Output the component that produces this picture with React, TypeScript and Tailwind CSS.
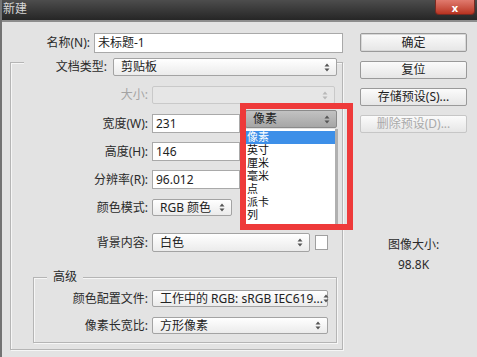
import React from 'react';

const font = "font-['Noto_Sans','Noto_Sans_CJK_SC',sans-serif]";

const Arrows = ({ color = '#555' }: { color?: string }) => (
  <svg width="6" height="9" viewBox="0 0 6 9" className="shrink-0">
    <path d="M3 0.5L5.5 3.5H0.5Z M3 8.5L0.5 5.5H5.5Z" fill={color} />
  </svg>
);

interface SelectProps {
  value?: string;
  width: string;
  height?: string;
  disabled?: boolean;
  active?: boolean;
}

const Select = ({ value, width, height = 'h-[18px]', disabled, active }: SelectProps) => (
  <div
    className={`${width} ${height} flex items-center justify-between rounded-[2px] border pl-[7px] pr-[6px] text-[12px] leading-none ${
      disabled
        ? 'border-[#c9c9c9] bg-[#e6e6e6]'
        : active
        ? 'border-[#8a8a8a] bg-gradient-to-b from-[#c2c2c2] to-[#a6a6a6] text-[#222]'
        : 'border-[#a3a3a3] bg-gradient-to-b from-white to-[#ebebeb] text-[#222]'
    }`}
  >
    <span className="whitespace-nowrap">{value}</span>
    <Arrows color={disabled ? '#b8b8b8' : '#555'} />
  </div>
);

const Input = ({ value, width }: { value: string; width: string }) => (
  <div className={`${width} h-[19px] flex items-center border border-[#a9a9a9] bg-white pl-[3px] text-[12px] text-[#222]`}>
    {value}
  </div>
);

const Label = ({ text, width, disabled }: { text: string; width: string; disabled?: boolean }) => (
  <div className={`${width} shrink-0 text-right text-[12px] leading-none whitespace-nowrap ${disabled ? 'text-[#a3a3a3]' : 'text-[#2a2a2a]'}`}>
    {text}
  </div>
);

const Button = ({ text, isDefault, disabled }: { text: string; isDefault?: boolean; disabled?: boolean }) => (
  <div
    className={`w-[107px] ${isDefault ? 'h-[19px] border-[#6a6a6a] shadow-[inset_0_0_0_1px_#d8d8d8]' : 'h-[18px]'} ${
      disabled ? 'border-[#c6c6c6] text-[#a9a9a9]' : 'border-[#9a9a9a] text-[#222]'
    } flex items-center justify-center rounded-[2px] border bg-gradient-to-b from-[#fbfbfb] to-[#e6e6e6] text-[12px] leading-none`}
  >
    {text}
  </div>
);

const units = ['像素', '英寸', '厘米', '毫米', '点', '派卡', '列'];

export default function App() {
  return (
    <div className={`${font} flex h-[357px] w-[477px] flex-col overflow-hidden border-l-2 border-[#737373] bg-[#e3e3e3]`}>
      {/* Title bar */}
      <div className="flex h-[22px] shrink-0 justify-between border-b-2 border-[#8d8d8d] bg-gradient-to-b from-[#4d4d4d] to-[#262626]">
        <span className="pl-[1px] pt-[2px] text-[12px] leading-[14px] text-[#d6d6d6]">新建</span>
        <div className="mr-[2px] flex h-[15px] w-[40px] items-center justify-center rounded-b-[4px] border border-t-0 border-[#7a2a22] bg-gradient-to-b from-[#e07a6e] to-[#b9321f] text-[11px] font-bold leading-none text-white">
          x
        </div>
      </div>

      {/* Body */}
      <div className="relative flex flex-1">
        {/* Left column */}
        <div className="flex w-[348px] flex-col">
          <div className="mt-[11px] flex h-[20px] items-center">
            <Label text="名称(N):" width="w-[88px]" />
            <div className="ml-[4px] flex h-[20px] w-[249px] items-center border border-[#a9a9a9] bg-white pl-[3px] text-[12px] text-[#222]">
              未标题-1
            </div>
          </div>

          {/* Preset group */}
          <div className="ml-[8px] mt-[9px] flex h-[288px] w-[333px] flex-col border border-[#b5b5b5] shadow-[inset_1px_1px_0_#f6f6f6,1px_1px_0_#f6f6f6]">
            <div className="-mt-[5px] ml-[13px] flex h-[18px] w-[313px] items-center bg-[#e3e3e3]">
              <Label text="文档类型:" width="w-[83px]" />
              <div className="ml-[6px]">
                <Select value="剪贴板" width="w-[224px]" />
              </div>
            </div>

            <div className="mt-[10px] flex h-[18px] items-center">
              <Label text="大小:" width="w-[137px]" disabled />
              <div className="ml-[4px]">
                <Select width="w-[183px]" disabled />
              </div>
            </div>

            <div className="mt-[10px] flex h-[19px] items-start">
              <div className="flex h-[19px] items-center">
                <Label text="宽度(W):" width="w-[137px]" />
              </div>
              <div className="ml-[4px]">
                <Input value="231" width="w-[88px]" />
              </div>
              <div className="-mt-[4px] ml-[5px]">
                <Select value="像素" width="w-[92px]" active />
              </div>
            </div>

            <div className="mt-[9px] flex h-[19px] items-center">
              <Label text="高度(H):" width="w-[137px]" />
              <div className="ml-[4px]">
                <Input value="146" width="w-[88px]" />
              </div>
            </div>

            <div className="mt-[9px] flex h-[19px] items-center">
              <Label text="分辨率(R):" width="w-[137px]" />
              <div className="ml-[4px]">
                <Input value="96.012" width="w-[88px]" />
              </div>
            </div>

            <div className="mt-[10px] flex h-[17px] items-center">
              <Label text="颜色模式:" width="w-[137px]" />
              <div className="ml-[4px]">
                <Select value="RGB 颜色" width="w-[80px]" height="h-[17px]" />
              </div>
            </div>

            <div className="mt-[17px] flex h-[19px] items-center">
              <Label text="背景内容:" width="w-[137px]" />
              <div className="ml-[4px]">
                <Select value="白色" width="w-[158px]" height="h-[19px]" />
              </div>
              <div className="ml-[5px] h-[15px] w-[13px] border border-[#a0a0a0] bg-white" />
            </div>

            {/* Advanced group */}
            <div className="ml-[22px] mt-[25px] flex h-[66px] w-[304px] flex-col border border-[#b5b5b5] shadow-[inset_1px_1px_0_#f6f6f6,1px_1px_0_#f6f6f6]">
              <div className="-mt-[8px] ml-[13px] flex h-[14px] w-fit items-center bg-[#e3e3e3] px-[6px] text-[12px] leading-none text-[#2a2a2a]">
                高级
              </div>
              <div className="mt-[6px] flex h-[17px] items-center">
                <Label text="颜色配置文件:" width="w-[114px]" />
                <div className="ml-[4px]">
                  <Select value="工作中的 RGB: sRGB IEC619..." width="w-[176px]" height="h-[17px]" />
                </div>
              </div>
              <div className="mt-[10px] flex h-[17px] items-center">
                <Label text="像素长宽比:" width="w-[114px]" />
                <div className="ml-[4px]">
                  <Select value="方形像素" width="w-[176px]" height="h-[17px]" />
                </div>
              </div>
            </div>
          </div>
        </div>

        {/* Right column */}
        <div className="ml-[10px] flex w-[107px] flex-col">
          <div className="mt-[11px]">
            <Button text="确定" isDefault />
          </div>
          <div className="mt-[9px]">
            <Button text="复位" />
          </div>
          <div className="mt-[9px]">
            <Button text="存储预设(S)..." />
          </div>
          <div className="mt-[9px]">
            <Button text="删除预设(D)..." disabled />
          </div>
          <div className="mt-[105px] text-center text-[12px] leading-[14px] text-[#2a2a2a]">图像大小:</div>
          <div className="mt-[6px] text-center text-[12px] leading-[14px] text-[#2a2a2a]">98.8K</div>
        </div>

        {/* Open unit dropdown */}
        <div className="absolute left-[244px] top-[107px] flex w-[92px] flex-col border-r-[3px] border-[#b0b0b0] bg-white pt-[2px] pb-[2px] font-['Liberation_Sans','Noto_Sans_CJK_SC',sans-serif]">
          {units.map((u, i) => (
            <div
              key={u}
              className={`flex h-[13px] items-center pl-[1px] text-[11px] leading-none ${i === 0 ? 'bg-[#3d8fe8] text-white' : 'text-[#111]'}`}
            >
              {u}
            </div>
          ))}
        </div>

        {/* Red highlight box */}
        <div className="pointer-events-none absolute left-[238px] top-[81px] h-[127px] w-[113px] border-[6px] border-[#ee3a3a]" />
      </div>
    </div>
  );
}
